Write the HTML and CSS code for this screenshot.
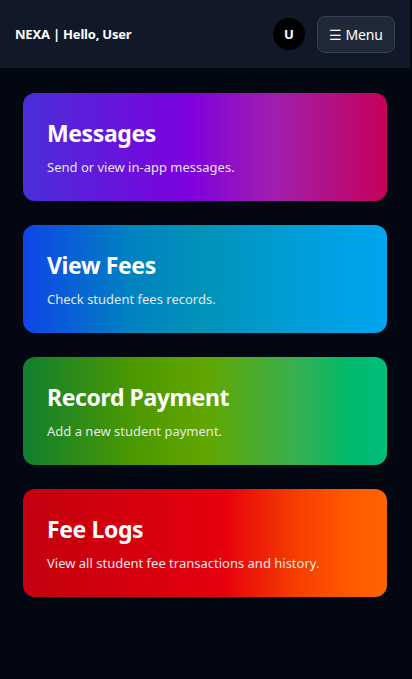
FILE: index.html
```html
<!DOCTYPE html>
<html lang="en">
<head>
<meta charset="utf-8">
<title>NEXA</title>
<link rel="stylesheet" href="styles.css">
</head>
<body>
<header class="topbar">
  <div class="brand">NEXA | Hello, User</div>
  <div class="actions">
    <div class="avatar">U</div>
    <button class="menu-btn">☰ Menu</button>
  </div>
</header>
<main class="cards">
  <a class="card card-messages" href="#">
    <h2>Messages</h2>
    <p>Send or view in-app messages.</p>
  </a>
  <a class="card card-fees" href="#">
    <h2>View Fees</h2>
    <p>Check student fees records.</p>
  </a>
  <a class="card card-payment" href="#">
    <h2>Record Payment</h2>
    <p>Add a new student payment.</p>
  </a>
  <a class="card card-logs" href="#">
    <h2>Fee Logs</h2>
    <p>View all student fee transactions and history.</p>
  </a>
</main>
</body>
</html>
```
FILE: styles.css
```css
* { box-sizing: border-box; }
html, body { margin: 0; padding: 0; }
body {
  background: #030712;
  color: #fff;
  font-family: "Noto Sans", "Open Sans", sans-serif;
  min-height: 679px;
}
.topbar {
  height: 68px;
  background: #111827;
  display: flex;
  align-items: center;
  justify-content: space-between;
  padding: 0 15px 0 15px;
  margin-right: 2px;
}
.brand {
  font-size: 13px;
  font-weight: 700;
  letter-spacing: -0.2px;
}
.actions {
  display: flex;
  align-items: center;
  gap: 12px;
}
.avatar {
  width: 32px;
  height: 32px;
  border-radius: 50%;
  background: #000;
  display: flex;
  align-items: center;
  justify-content: center;
  font-size: 13px;
  font-weight: 700;
}
.menu-btn {
  font-family: inherit;
  font-size: 14px;
  color: #fff;
  background: #1f2937;
  border: 1px solid #374151;
  border-radius: 8px;
  width: 78px;
  height: 37px;
  padding: 0;
  line-height: 19px;
  letter-spacing: -0.2px;
}
.cards {
  display: flex;
  flex-direction: column;
  gap: 24px;
  padding: 25px 25px 0 23px;
}
.card {
  display: block;
  text-decoration: none;
  color: #fff;
  border-radius: 12px;
  padding: 24px 24px;
  height: 108px;
}
.card h2 {
  margin: 0;
  font-size: 23px;
  line-height: 32px;
  font-weight: 700;
  letter-spacing: -0.4px;
}
.card p {
  margin: 8px 0 0;
  font-size: 13px;
  line-height: 20px;
  color: #e5e7eb;
}
.card-messages {
  background: linear-gradient(to right, #4a2fd8 0%, #7d00de 45%, #a11fab 70%, #c6005a 100%);
}
.card-fees {
  background: linear-gradient(to right, #0f45e8 0%, #0083c0 30%, #0093b8 50%, #009ed8 75%, #00a5f0 100%);
}
.card-payment {
  background: linear-gradient(to right, #117f30 0%, #4a9800 30%, #62a600 50%, #38b050 75%, #00b96c 90%, #00be7c 100%);
}
.card-logs {
  background: linear-gradient(to right, #c2000f 0%, #d8000e 35%, #e6000e 55%, #f53e00 75%, #ff5a00 90%, #ff6400 100%);
}
```
